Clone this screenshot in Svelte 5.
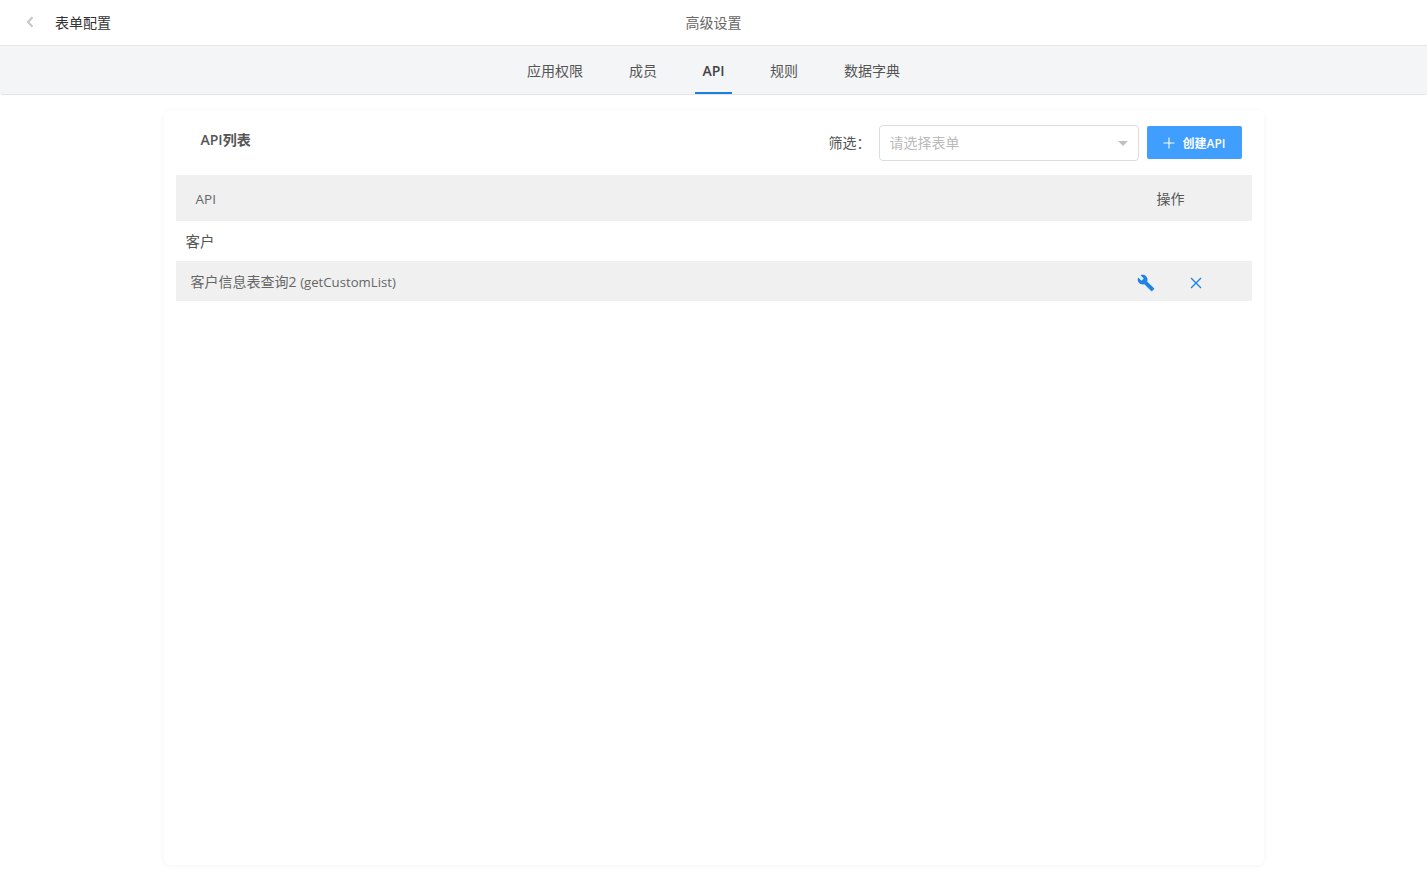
<script>
  const tabs = ['应用权限', '成员', 'API', '规则', '数据字典'];
</script>

<div class="page">
  <header class="top">
    <div class="back">
      <svg class="chev" width="8" height="12" viewBox="0 0 8 12"><path d="M6.5 1.2 2 6l4.5 4.8" fill="none" stroke="#c4c6ca" stroke-width="2"/></svg>
      <span class="back-text">表单配置</span>
    </div>
    <div class="title">高级设置</div>
  </header>
  <nav class="tabs">
    {#each tabs as t}
      <div class="tab" class:active={t === 'API'}>{t}</div>
    {/each}
  </nav>
  <main class="card">
    <div class="toolbar">
      <h2>API列表</h2>
      <div class="tools">
        <span class="label">筛选：</span>
        <div class="select">
          <span class="ph">请选择表单</span>
          <i class="caret"></i>
        </div>
        <button>
          <svg width="12" height="12" viewBox="0 0 12 12"><path d="M6 .5v11M.5 6h11" stroke="#fff" stroke-width="1.1" fill="none"/></svg>
          <span>创建API</span>
        </button>
      </div>
    </div>
    <div class="thead">
      <div class="th-api">API</div>
      <div class="th-op">操作</div>
    </div>
    <div class="group">客户</div>
    <div class="row">
      <div class="name">客户信息表查询2 <span class="latin">(getCustomList)</span></div>
      <div class="ops">
        <svg class="wrench" width="18" height="18" viewBox="0 0 24 24"><path fill="#1d83e5" d="M22.7 19 13.6 9.9c.9-2.3.4-5-1.5-6.9-2-2-5-2.4-7.4-1.3L9 6 6 9 1.600 4.700C.4 7.100.9 10.100 2.900 12.100c1.900 1.900 4.600 2.400 6.900 1.500l9.100 9.100c.4.400 1 .4 1.400 0l2.300-2.300c.5-.4.500-1.100.100-1.400z"/></svg>
        <svg class="close" width="12" height="12" viewBox="0 0 12 12"><path d="M1 1l10 10M11 1 1 11" stroke="#1d83e5" stroke-width="1.4" fill="none"/></svg>
      </div>
    </div>
  </main>
</div>

<style>
  :global(body) {
    margin: 0;
    background: #fff;
    font-family: "Open Sans", "Noto Sans CJK SC", sans-serif;
    font-size: 14px;
    color: #555;
  }
  .page { height: 885px; display: flex; flex-direction: column; overflow: hidden; }
  .top {
    height: 45px;
    flex: none;
    border-bottom: 1px solid #e4e5e7;
    display: flex;
    align-items: center;
    justify-content: center;
    position: relative;
  }
  .back {
    position: absolute;
    left: 26px;
    top: 0;
    height: 45px;
    display: flex;
    align-items: center;
    gap: 21px;
    color: #333;
    font-size: 14px;
  }
  .chev { margin-top: -2px; }
  .back-text { margin-top: -2px; }
  .title { color: #666; font-size: 14px; margin-top: -2px; }
  .tabs {
    height: 48px;
    flex: none;
    background: #f4f5f7;
    border-bottom: 1px solid #e3e4e7;
    display: flex;
    justify-content: center;
    border-radius: 0 0 3px 3px;
  }
  .tab {
    padding: 0 8px;
    margin: 0 15px;
    line-height: 50px;
    height: 48px;
    color: #555;
    box-sizing: border-box;
    font-size: 14px;
  }
  .tab.active {
    width: 37px;
    padding: 0;
    text-align: center;
    border-bottom: 2px solid #1a7fe0;
    font-weight: 600;
    color: #444;
  }
  .card {
    box-sizing: border-box;
    width: 1100px;
    height: 755px;
    margin: 15px auto 0;
    padding: 0 12px;
    background: #fff;
    border-radius: 6px;
    box-shadow: 0 1px 5px rgba(0, 0, 0, 0.05);
  }
  .toolbar {
    height: 65px;
    display: flex;
    align-items: center;
    justify-content: space-between;
    padding: 0 10px 0 25px;
  }
  h2 { margin: 0 0 7px; font-size: 14px; font-weight: 600; color: #555; }
  .tools { display: flex; align-items: center; margin-top: 1px; }
  .label { width: 50px; color: #555; margin-top: -2px; }
  .select {
    box-sizing: border-box;
    width: 260px;
    height: 36px;
    border: 1px solid #dcdcdc;
    border-radius: 4px;
    padding: 0 10px;
    display: flex;
    align-items: center;
    justify-content: space-between;
    color: #bbb;
    margin-right: 8px;
  }
  .ph { margin-top: -2px; }
  .caret {
    width: 0;
    height: 0;
    border-left: 5px solid transparent;
    border-right: 5px solid transparent;
    border-top: 5px solid #c0c0c0;
  }
  button {
    width: 95px;
    height: 33px;
    margin-top: -1px;
    border: 0;
    border-radius: 2px;
    background: #409eff;
    color: #fff;
    font: inherit;
    font-size: 12px;
    font-weight: 600;
    display: flex;
    align-items: center;
    justify-content: center;
    gap: 8px;
    padding: 0;
  }
  .thead {
    height: 46px;
    background: #f0f0f0;
    display: flex;
    align-items: center;
    justify-content: space-between;
    padding: 0 67px 0 20px;
    color: #666;
    font-size: 13.5px;
  }
  .th-api { margin-top: 1px; }
  .th-op { font-size: 14px; color: #555; }
  .group { height: 40px; line-height: 41px; padding-left: 10px; color: #555; font-size: 14.5px; }
  .row {
    height: 40px;
    background: #f0f0f0;
    display: flex;
    align-items: center;
    justify-content: space-between;
    padding-left: 15px;
  }
  .name { font-size: 14px; color: #666; }
  .latin { font-size: 13.2px; }
  .ops { display: flex; align-items: center; width: 115px; gap: 35px; }
  .wrench { margin-top: 3px; }
  .close { margin-top: 3px; }
</style>
